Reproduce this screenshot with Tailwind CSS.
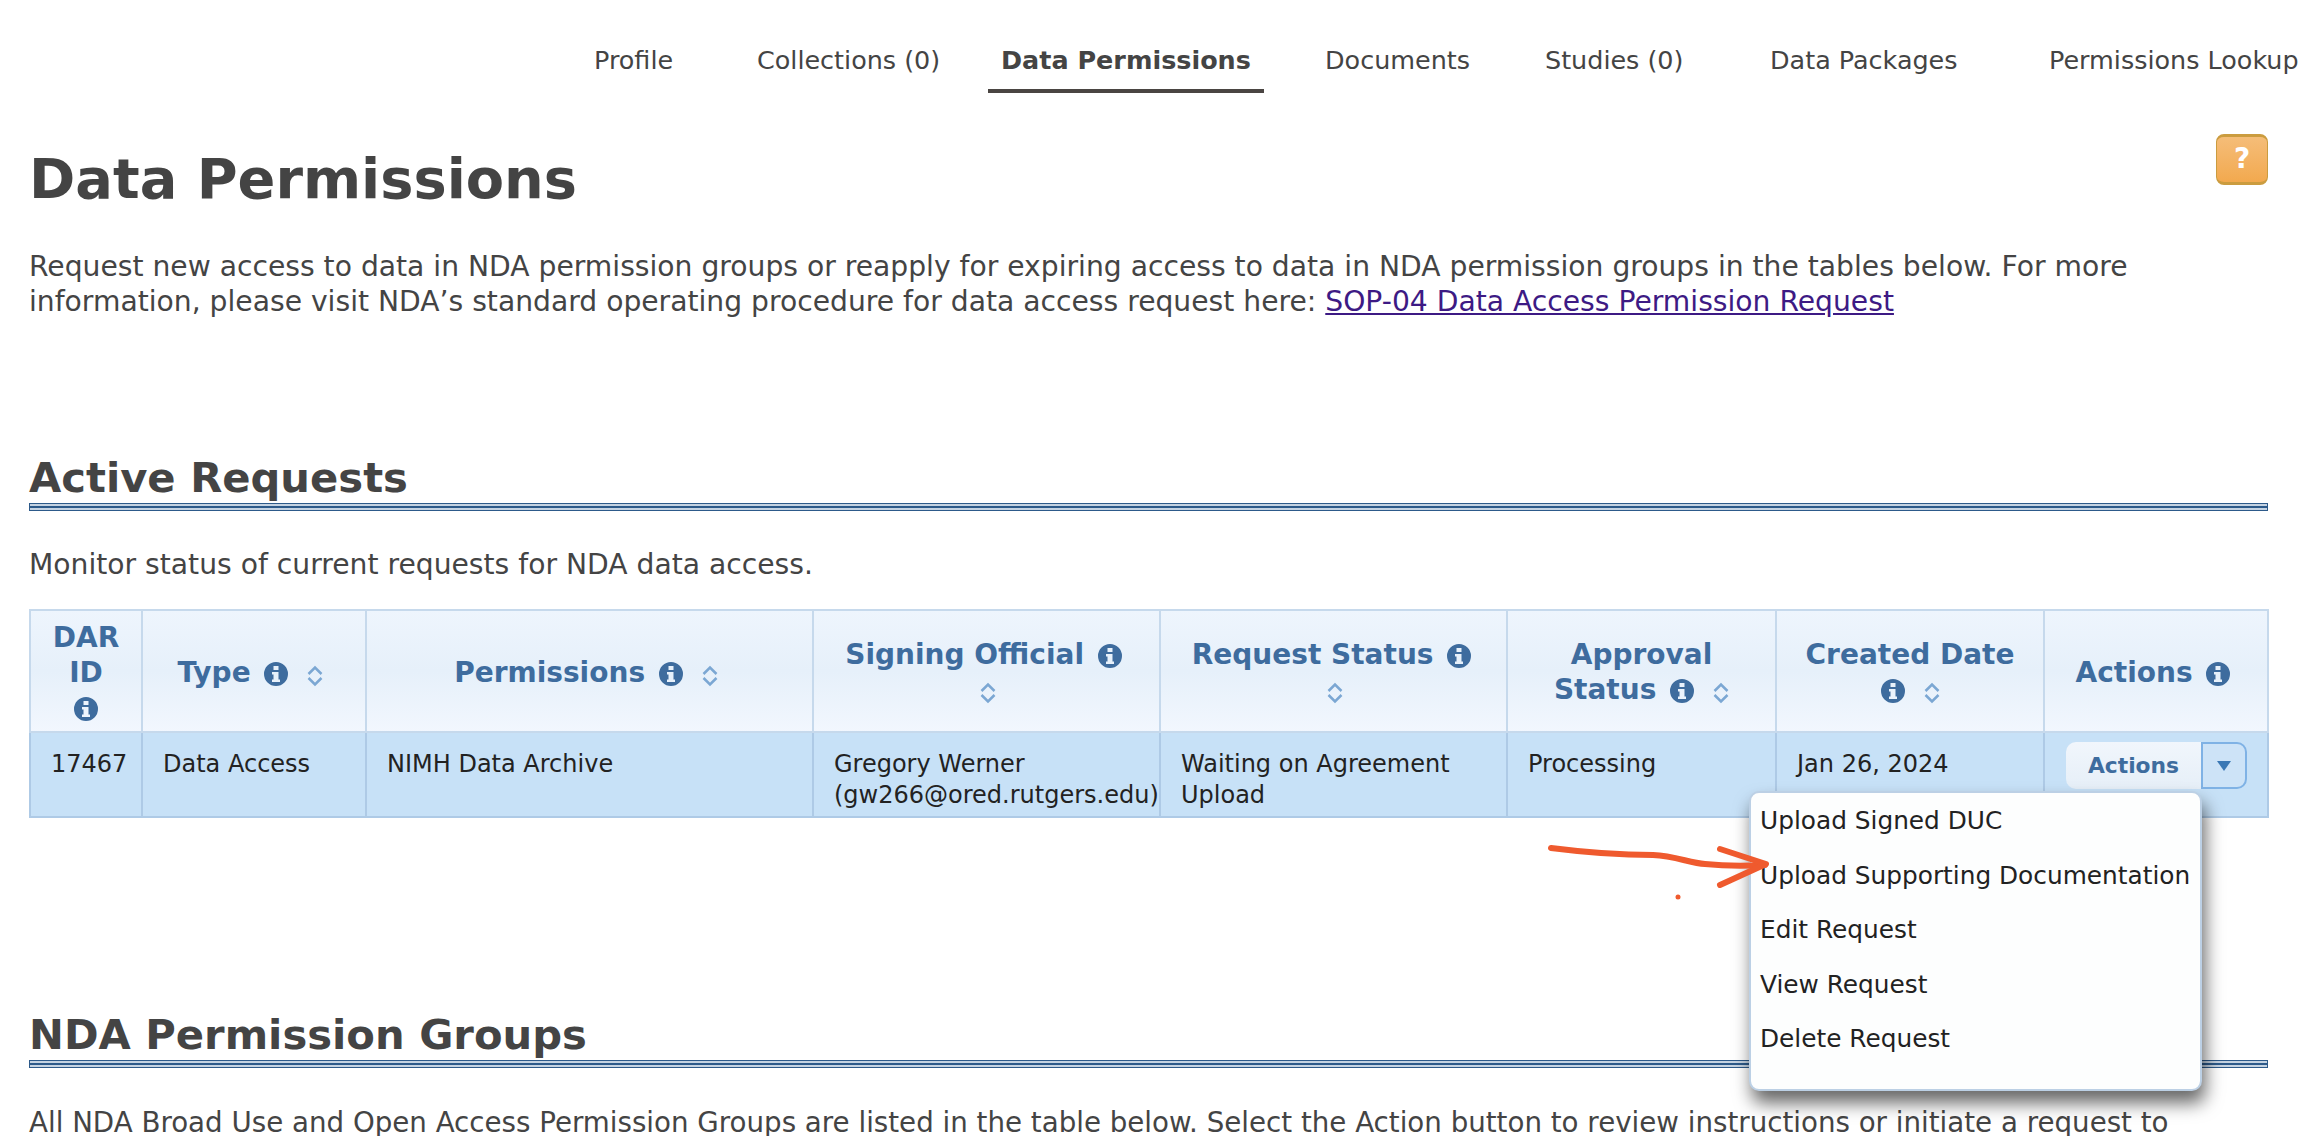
<!DOCTYPE html>
<html>
<head>
<meta charset="utf-8">
<script src="https://cdn.jsdelivr.net/npm/@tailwindcss/browser@4"></script>
</head>
<body class="bg-white">
<div class="relative w-[2298px] h-[1136px] overflow-hidden font-['DejaVu_Sans',sans-serif] text-[#444] text-[28.2px] leading-[35px]">
  <nav class="flex h-[93px] pl-[594px] pt-[43px] text-[25.45px] leading-[35px] whitespace-nowrap">
    <div class="w-[163px] shrink-0">Profile</div>
    <div class="w-[244px] shrink-0">Collections (0)</div>
    <div class="w-[324px] shrink-0"><div class="-ml-[13px] w-[276px] h-[50px] pl-[13px] font-bold border-b-4 border-[#4a4542]">Data Permissions</div></div>
    <div class="w-[220px] shrink-0">Documents</div>
    <div class="w-[225px] shrink-0">Studies (0)</div>
    <div class="w-[279px] shrink-0">Data Packages</div>
    <div class="shrink-0">Permissions Lookup</div>
  </nav>
  <main class="pl-[29px] pr-[30px]">
    <div class="flex justify-between items-start pt-[41px]">
      <h1 class="mt-[10px] text-[55.8px] leading-[70px] font-bold">Data Permissions</h1>
      <div class="w-[52px] h-[51px] rounded-lg border border-[#cb9c3f] border-t-[3px] border-b-[3px] bg-gradient-to-b from-[#f5bd78] to-[#f2a94e] text-white font-bold text-[28px] leading-[44px] text-center">?</div>
    </div>
    <p class="mt-[35px] whitespace-nowrap">Request new access to data in NDA permission groups or reapply for expiring access to data in NDA permission groups in the tables below. For more<br>information, please visit NDA’s standard operating procedure for data access request here: <a class="underline text-[#3d1a84]">SOP-04 Data Access Permission Request</a></p>

    <h2 class="mt-[134px] text-[41.7px] leading-[50px] font-bold">Active Requests</h2>
    <div class="h-[8px] border border-[#2d5a8a] bg-[#c5d3e2] flex items-center"><div class="h-[2px] w-full bg-[#2d5a8a]"></div></div>
    <p class="mt-[36px] h-[35px]">Monitor status of current requests for NDA data access.</p>

    <table class="mt-[27px] w-[2238px] table-fixed border-collapse">
      <colgroup>
        <col class="w-[112px]"><col class="w-[224px]"><col class="w-[447px]"><col class="w-[347px]"><col class="w-[347px]"><col class="w-[269px]"><col class="w-[268px]"><col class="w-[224px]">
      </colgroup>
      <thead>
        <tr class="h-[122px] bg-gradient-to-b from-[#eef5fd] via-[#e6f0fa] to-[#f2f7fe] text-[#3e6c9e] text-[28px] leading-[35px] font-bold text-center">
          <th class="border-2 border-[#c6d9ec] px-1 pt-[2px] font-bold">DAR<br>ID<br><svg class="inline-block align-[-4px] w-6 h-6" viewBox="0 0 24 24"><path fill="#3e6c9e" fill-rule="evenodd" d="M12 0a12 12 0 1 0 0 24a12 12 0 1 0 0-24zM9.5 4h5v4h-5zM8 10h6.500v7.500H16V20H8v-2.500h1.500v-5H8z"/></svg></th>
          <th class="border-2 border-[#c6d9ec] pt-[2px] font-bold">Type <svg class="inline-block align-[-4px] ml-1 w-6 h-6" viewBox="0 0 24 24"><path fill="#3e6c9e" fill-rule="evenodd" d="M12 0a12 12 0 1 0 0 24a12 12 0 1 0 0-24zM9.5 4h5v4h-5zM8 10h6.500v7.500H16V20H8v-2.500h1.500v-5H8z"/></svg><svg class="inline-block align-[-5px] ml-[19px] mr-[7px] w-4 h-[22px]" viewBox="0 0 16 22" fill="none" stroke="#7ba7d3" stroke-width="2.500"><path d="M1.500 9L8 2.500L14.500 9M1.500 13L8 19.500L14.500 13"/></svg></th>
          <th class="border-2 border-[#c6d9ec] pt-[2px] font-bold">Permissions <svg class="inline-block align-[-4px] ml-1 w-6 h-6" viewBox="0 0 24 24"><path fill="#3e6c9e" fill-rule="evenodd" d="M12 0a12 12 0 1 0 0 24a12 12 0 1 0 0-24zM9.5 4h5v4h-5zM8 10h6.500v7.500H16V20H8v-2.500h1.500v-5H8z"/></svg><svg class="inline-block align-[-5px] ml-[19px] mr-[7px] w-4 h-[22px]" viewBox="0 0 16 22" fill="none" stroke="#7ba7d3" stroke-width="2.500"><path d="M1.500 9L8 2.500L14.500 9M1.500 13L8 19.500L14.500 13"/></svg></th>
          <th class="border-2 border-[#c6d9ec] pt-[2px] font-bold whitespace-nowrap">Signing Official <svg class="inline-block align-[-4px] ml-1 mr-[6px] w-6 h-6" viewBox="0 0 24 24"><path fill="#3e6c9e" fill-rule="evenodd" d="M12 0a12 12 0 1 0 0 24a12 12 0 1 0 0-24zM9.5 4h5v4h-5zM8 10h6.500v7.500H16V20H8v-2.500h1.500v-5H8z"/></svg><br><svg class="inline-block align-[-5px] ml-[2px] w-4 h-[22px]" viewBox="0 0 16 22" fill="none" stroke="#7ba7d3" stroke-width="2.500"><path d="M1.500 9L8 2.500L14.500 9M1.500 13L8 19.500L14.500 13"/></svg></th>
          <th class="border-2 border-[#c6d9ec] pt-[2px] font-bold whitespace-nowrap">Request Status <svg class="inline-block align-[-4px] ml-1 mr-[4px] w-6 h-6" viewBox="0 0 24 24"><path fill="#3e6c9e" fill-rule="evenodd" d="M12 0a12 12 0 1 0 0 24a12 12 0 1 0 0-24zM9.5 4h5v4h-5zM8 10h6.500v7.500H16V20H8v-2.500h1.500v-5H8z"/></svg><br><svg class="inline-block align-[-5px] ml-[2px] w-4 h-[22px]" viewBox="0 0 16 22" fill="none" stroke="#7ba7d3" stroke-width="2.500"><path d="M1.500 9L8 2.500L14.500 9M1.500 13L8 19.500L14.500 13"/></svg></th>
          <th class="border-2 border-[#c6d9ec] pt-[2px] font-bold">Approval<br>Status <svg class="inline-block align-[-4px] ml-1 w-6 h-6" viewBox="0 0 24 24"><path fill="#3e6c9e" fill-rule="evenodd" d="M12 0a12 12 0 1 0 0 24a12 12 0 1 0 0-24zM9.5 4h5v4h-5zM8 10h6.500v7.500H16V20H8v-2.500h1.500v-5H8z"/></svg><svg class="inline-block align-[-5px] ml-[19px] w-4 h-[22px]" viewBox="0 0 16 22" fill="none" stroke="#7ba7d3" stroke-width="2.500"><path d="M1.500 9L8 2.500L14.500 9M1.500 13L8 19.500L14.500 13"/></svg></th>
          <th class="border-2 border-[#c6d9ec] pt-[2px] font-bold">Created Date<br><svg class="inline-block align-[-4px] w-6 h-6" viewBox="0 0 24 24"><path fill="#3e6c9e" fill-rule="evenodd" d="M12 0a12 12 0 1 0 0 24a12 12 0 1 0 0-24zM9.5 4h5v4h-5zM8 10h6.500v7.500H16V20H8v-2.500h1.500v-5H8z"/></svg><svg class="inline-block align-[-5px] ml-[19px] w-4 h-[22px]" viewBox="0 0 16 22" fill="none" stroke="#7ba7d3" stroke-width="2.500"><path d="M1.500 9L8 2.500L14.500 9M1.500 13L8 19.500L14.500 13"/></svg></th>
          <th class="border-2 border-[#c6d9ec] pt-[2px] font-bold">Actions <svg class="inline-block align-[-4px] ml-1 mr-[6px] w-6 h-6" viewBox="0 0 24 24"><path fill="#3e6c9e" fill-rule="evenodd" d="M12 0a12 12 0 1 0 0 24a12 12 0 1 0 0-24zM9.5 4h5v4h-5zM8 10h6.500v7.500H16V20H8v-2.500h1.500v-5H8z"/></svg></th>
        </tr>
      </thead>
      <tbody>
        <tr class="h-[85px] bg-[#c7e1f7] text-[#222] text-[24px] leading-[31px] align-top">
          <td class="border-2 border-[#aecae6] pt-[16px] pl-[20px]">17467</td>
          <td class="border-2 border-[#aecae6] pt-[16px] pl-[20px]">Data Access</td>
          <td class="border-2 border-[#aecae6] pt-[16px] pl-[20px]">NIMH Data Archive</td>
          <td class="border-2 border-[#aecae6] pt-[16px] pl-[20px]">Gregory Werner<br>(gw266@ored.rutgers.edu)</td>
          <td class="border-2 border-[#aecae6] pt-[16px] pl-[20px]">Waiting on Agreement Upload</td>
          <td class="border-2 border-[#aecae6] pt-[16px] pl-[20px]">Processing</td>
          <td class="border-2 border-[#aecae6] pt-[16px] pl-[20px]">Jan 26, 2024</td>
          <td class="border-2 border-[#aecae6] pt-[9px] pl-[21px]">
            <div class="flex w-[181px] h-[47px]">
              <div class="w-[135px] rounded-l-[10px] bg-gradient-to-b from-[#f1f6fc] to-[#e6eff8] text-[#3e6c9e] font-bold text-[21.8px] leading-[47px] text-center">Actions</div>
              <div class="w-[46px] rounded-r-[10px] border-2 border-[#7fb2e5] bg-[#cde3f7] flex items-center justify-center">
                <svg class="w-[14px] h-[10px]" viewBox="0 0 14 10"><path fill="#3a78b5" d="M0 0h14L7 10z"/></svg>
              </div>
            </div>
          </td>
        </tr>
      </tbody>
    </table>

    <h2 class="mt-[192px] text-[41.7px] leading-[50px] font-bold">NDA Permission Groups</h2>
    <div class="h-[8px] border border-[#2d5a8a] bg-[#c5d3e2] flex items-center"><div class="h-[2px] w-full bg-[#2d5a8a]"></div></div>
    <p class="mt-[37px] whitespace-nowrap text-[27.7px]">All NDA Broad Use and Open Access Permission Groups are listed in the table below. Select the Action button to review instructions or initiate a request to</p>
  </main>

  <div class="absolute left-[1749px] top-[791px] w-[453px] h-[300px] rounded-[10px] border-2 border-[#bcd0e5] bg-[#fdfefe] shadow-[3px_12px_18px_rgba(0,0,0,0.6)] pl-[9px] pt-[1px] text-[#222] text-[24.8px] leading-[54.6px] whitespace-nowrap">
    <div>Upload Signed DUC</div>
    <div>Upload Supporting Documentation</div>
    <div>Edit Request</div>
    <div>View Request</div>
    <div>Delete Request</div>
  </div>

  <svg class="absolute left-0 top-0 pointer-events-none" width="2298" height="1136" fill="none" stroke="#ef5a2e" stroke-width="6" stroke-linecap="round" stroke-linejoin="round">
    <path d="M1551 848C1590 853 1625 855 1653 855C1675 856 1690 863 1705 864C1725 866 1745 866 1765 865"/>
    <path d="M1720 849L1766 864L1720 885"/>
    <circle cx="1678" cy="897" r="2.500" fill="#ef5a2e" stroke="none"/>
  </svg>
</div>
</body>
</html>
